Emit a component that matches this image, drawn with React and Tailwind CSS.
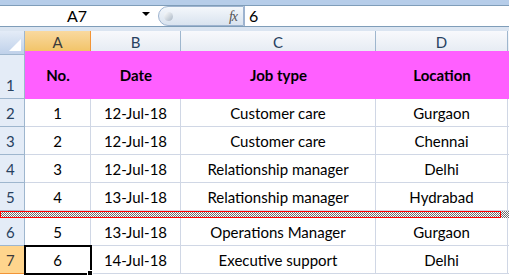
import React from 'react';

const rows = [
  { n: '2', no: '1', date: '12-Jul-18', job: 'Customer care', loc: 'Gurgaon' },
  { n: '3', no: '2', date: '12-Jul-18', job: 'Customer care', loc: 'Chennai' },
  { n: '4', no: '3', date: '12-Jul-18', job: 'Relationship manager', loc: 'Delhi' },
  { n: '5', no: '4', date: '13-Jul-18', job: 'Relationship manager', loc: 'Hydrabad' },
];

const rowsAfter = [
  { n: '6', no: '5', date: '13-Jul-18', job: 'Operations Manager', loc: 'Gurgaon' },
  { n: '7', no: '6', date: '14-Jul-18', job: 'Executive support', loc: 'Delhi', sel: true },
];

const cols = 'grid grid-cols-[25px_66px_90px_195px_132px_1fr]';

function DataRow({ r }) {
  return (
    <div className={`${cols} h-[28px]`}>
      <div
        className={`flex items-center pl-[6px] pt-[2px] border-r border-b ${
          r.sel ? 'bg-[#ffd58d] border-[#f29436] text-[#3b3b3b]' : 'bg-[#e4ecf7] border-[#9eb6ce] text-[#27415f]'
        }`}
      >
        {r.n}
      </div>
      <div className={`relative flex items-center justify-center pt-[2px] border-r border-b border-[#d0d7e5] ${r.sel ? 'outline-2 outline-black -outline-offset-1' : ''}`}>
        {r.no}
        {r.sel && <span className="absolute -right-[3px] -bottom-[3px] w-[6px] h-[6px] bg-black border border-white" />}
      </div>
      <div className="flex items-center justify-center pt-[2px] border-r border-b border-[#d0d7e5]">{r.date}</div>
      <div className="flex items-center justify-center pt-[2px] border-r border-b border-[#d0d7e5]">{r.job}</div>
      <div className="flex items-center justify-center pt-[2px] border-r border-b border-[#d0d7e5]">{r.loc}</div>
      <div className="border-b border-[#d0d7e5]" />
    </div>
  );
}

export default function App() {
  return (
    <div className="w-[509px] h-[277px] overflow-hidden bg-white text-[15px] text-black" style={{ fontFamily: 'Lato, "Open Sans", sans-serif' }}>
      {/* formula bar */}
      <div className="h-[5px] bg-[#b6cde9]" />
      <div className="h-[22px] flex items-center border-y border-[#7f9db9] bg-white">
        <div className="w-[148px] flex items-center justify-center text-[16px] pl-[6px] relative">
          A7
          <span className="absolute right-[-2px] top-[8px] w-0 h-0 border-l-[4px] border-r-[4px] border-t-[4px] border-l-transparent border-r-transparent border-t-black" />
        </div>
        <div className="ml-[10px] w-[86px] h-[20px] rounded-l-full border border-[#9db3cf] bg-gradient-to-b from-[#f4f7fb] to-[#d9e3ef] flex items-center relative">
          <span className="ml-[5px] w-[9px] h-[9px] rounded-full bg-gradient-to-br from-white to-[#a9b6c4]" />
          <span className="absolute right-[6px] top-[-1px] italic text-[14px] text-[#555] tracking-[-1px]" style={{ fontFamily: '"Liberation Serif", serif' }}>fx</span>
        </div>
        <div className="w-[1px] h-[20px] bg-[#9db3cf]" />
        <div className="pl-[4px] text-[16px]">6</div>
      </div>
      <div className="h-[4px] bg-[#dbe5f1]" />

      {/* column header */}
      <div className={`${cols} h-[20px] text-[15px] text-[#27415f]`}>
        <div className="bg-gradient-to-b from-[#e4ecf7] to-[#bfd1ea] border-r border-b border-[#9eb6ce] relative">
          <span className="absolute right-[3px] bottom-[3px] w-0 h-0 border-l-[12px] border-b-[12px] border-l-transparent border-b-white" />
        </div>
        <div className="flex items-center justify-center bg-gradient-to-b from-[#f9d99f] to-[#f1c15f] border-r border-b border-[#f29436] text-[#3b3b3b]">A</div>
        <div className="flex items-center justify-center bg-gradient-to-b from-[#f8f9fc] to-[#e4eaf2] border-r border-b border-[#9eb6ce]">B</div>
        <div className="flex items-center justify-center bg-gradient-to-b from-[#f8f9fc] to-[#e4eaf2] border-r border-b border-[#9eb6ce]">C</div>
        <div className="flex items-center justify-center bg-gradient-to-b from-[#f8f9fc] to-[#e4eaf2] border-r border-b border-[#9eb6ce]">D</div>
        <div className="bg-gradient-to-b from-[#f8f9fc] to-[#e4eaf2] border-b border-[#9eb6ce]" />
      </div>

      {/* row 1 header */}
      <div className={`${cols} h-[48px] font-bold`}>
        <div className="flex items-end pb-[2px] pl-[6px] bg-[#e4ecf7] border-r border-b border-[#9eb6ce] text-[#27415f] font-normal">1</div>
        <div className="flex items-center justify-center bg-[#ff5fff]">No.</div>
        <div className="flex items-center justify-center bg-[#ff5fff]">Date</div>
        <div className="flex items-center justify-center bg-[#ff5fff]">Job type</div>
        <div className="flex items-center justify-center bg-[#ff5fff]">Location</div>
        <div className="bg-[#ff5fff]" />
      </div>

      {rows.map((r) => (
        <DataRow key={r.n} r={r} />
      ))}

      {/* split bar */}
      <div className="h-[7px] flex">
        <div className="w-[501px] h-[7px] border border-[#ff0000] bg-[repeating-conic-gradient(#6e6e6e_0_25%,#ffffff_0_50%)] bg-[length:2px_2px]" />
        <div className="flex-1 h-[7px] bg-[repeating-conic-gradient(#6e6e6e_0_25%,#ffffff_0_50%)] bg-[length:2px_2px]" />
      </div>

      {rowsAfter.map((r) => (
        <DataRow key={r.n} r={r} />
      ))}
    </div>
  );
}
